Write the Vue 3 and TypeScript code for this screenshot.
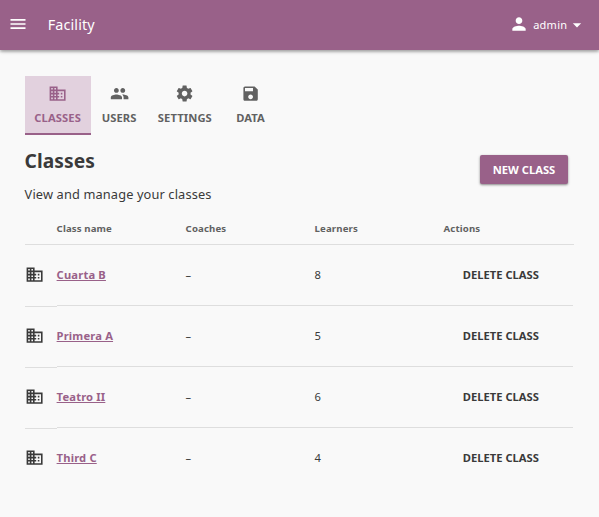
<script setup lang="ts">
interface Tab { label: string; path: string; width: number; active?: boolean }
interface Classroom { name: string; coaches: string; learners: number }

const business = 'M12 7V3H2v18h20V7H12zM6 19H4v-2h2v2zm0-4H4v-2h2v2zm0-4H4V9h2v2zm0-4H4V5h2v2zm4 12H8v-2h2v2zm0-4H8v-2h2v2zm0-4H8V9h2v2zm0-4H8V5h2v2zm10 12h-8v-2h2v-2h-2v-2h2v-2h-2V9h8v10zm-2-8h-2v2h2v-2zm0 4h-2v2h2v-2z'

const tabs: Tab[] = [
  { label: 'Classes', path: business, width: 66, active: true },
  { label: 'Users', width: 57, path: 'M16 11c1.66 0 2.99-1.34 2.99-3S17.66 5 16 5s-3 1.34-3 3 1.34 3 3 3zm-8 0c1.66 0 2.99-1.34 2.99-3S9.66 5 8 5 5 6.34 5 8s1.34 3 3 3zm0 2c-2.33 0-7 1.17-7 3.5V19h14v-2.500c0-2.330-4.670-3.500-7-3.500zm8 0c-.29 0-.62.020-.97.050 1.160.840 1.970 1.970 1.970 3.450V19h6v-2.500c0-2.330-4.670-3.500-7-3.500z' },
  { label: 'Settings', width: 74.500, path: 'M19.430 12.980c.040-.320.070-.640.070-.980s-.030-.660-.070-.980l2.110-1.650c.190-.150.240-.420.120-.640l-2-3.460c-.120-.220-.390-.300-.610-.220l-2.490 1c-.520-.400-1.080-.730-1.690-.980l-.380-2.650C14.460 2.180 14.250 2 14 2h-4c-.250 0-.460.180-.490.420l-.380 2.650c-.610.250-1.170.590-1.690.980l-2.490-1c-.230-.090-.490 0-.610.220l-2 3.460c-.130.220-.070.490.120.640l2.110 1.650c-.040.320-.070.650-.070.980s.030.660.070.980l-2.110 1.650c-.190.150-.240.420-.120.640l2 3.460c.120.220.390.300.610.220l2.490-1c.520.400 1.080.730 1.690.980l.380 2.650c.030.240.240.420.490.420h4c.250 0 .460-.180.490-.420l.380-2.650c.610-.250 1.170-.590 1.690-.980l2.490 1c.230.090.490 0 .610-.220l2-3.460c.120-.220.070-.490-.120-.640l-2.110-1.650zM12 15.500c-1.930 0-3.500-1.570-3.500-3.500s1.570-3.500 3.500-3.500 3.500 1.570 3.500 3.500-1.570 3.500-3.500 3.500z' },
  { label: 'Data', width: 57, path: 'M17 3H5c-1.110 0-2 .900-2 2v14c0 1.100.890 2 2 2h14c1.100 0 2-.900 2-2V7l-4-4zm-5 16c-1.660 0-3-1.340-3-3s1.340-3 3-3 3 1.340 3 3-1.340 3-3 3zm3-10H5V5h10v4z' },
]

const classes: Classroom[] = [
  { name: 'Cuarta B', coaches: '–', learners: 8 },
  { name: 'Primera A', coaches: '–', learners: 5 },
  { name: 'Teatro II', coaches: '–', learners: 6 },
  { name: 'Third C', coaches: '–', learners: 4 },
]
</script>

<template>
  <div class="page">
    <header class="app-bar">
      <svg class="menu" viewBox="0 0 24 24"><path d="M3 18h18v-2H3v2zm0-5h18v-2H3v2zm0-7v2h18V6H3z" /></svg>
      <span class="app-title">Facility</span>
      <div class="account">
        <svg class="person" viewBox="0 0 24 24"><path d="M12 12c2.210 0 4-1.790 4-4s-1.790-4-4-4-4 1.790-4 4 1.790 4 4 4zm0 2c-2.670 0-8 1.340-8 4v2h16v-2c0-2.660-5.330-4-8-4z" /></svg>
        <span class="username">admin</span>
        <svg class="caret" viewBox="0 0 24 24"><path d="M7 10l5 5 5-5z" /></svg>
      </div>
    </header>

    <main class="content">
      <nav class="tabs">
        <div v-for="tab in tabs" :key="tab.label" class="tab" :class="{ active: tab.active }" :style="{ width: tab.width + 'px' }">
          <svg class="tab-icon" viewBox="0 0 24 24"><path :d="tab.path" /></svg>
          <span>{{ tab.label }}</span>
        </div>
      </nav>

      <section class="heading">
        <div>
          <h1>Classes</h1>
          <p>View and manage your classes</p>
        </div>
        <button class="new-class">New class</button>
      </section>

      <div class="table">
        <div class="row head">
          <span></span><span>Class name</span><span>Coaches</span><span>Learners</span><span>Actions</span>
        </div>
        <div v-for="item in classes" :key="item.name" class="row body-row">
          <div class="cell icon-cell"><svg viewBox="0 0 24 24"><path :d="business" /></svg></div>
          <div class="cell"><a class="link">{{ item.name }}</a></div>
          <div class="cell">{{ item.coaches }}</div>
          <div class="cell">{{ item.learners }}</div>
          <div class="cell"><button class="delete">Delete class</button></div>
        </div>
      </div>
    </main>
  </div>
</template>

<style>
body { background: #f9f9f9; }
</style>

<style scoped>
.page {
  height: 517px;
  overflow: hidden;
  background: #f9f9f9;
  color: #3a3a3a;
  font-family: "Noto Sans", sans-serif;
}
svg { display: block; fill: currentColor; flex: none; }
button { font-family: inherit; border: 0; text-transform: uppercase; white-space: nowrap; }
.app-bar {
  height: 50px;
  box-sizing: border-box;
  display: flex;
  align-items: center;
  padding: 0 12px 0 8px;
  background: #996189;
  color: #fff;
  box-shadow: 0 2px 4px -1px rgba(0, 0, 0, .2), 0 1px 5px rgba(0, 0, 0, .12), 0 2px 2px rgba(0, 0, 0, .14);
}
.menu { width: 20px; height: 20px; margin-top: -2px; }
.app-title { margin-left: 19.800px; font-size: 14.400px; line-height: 20px; letter-spacing: .1px; }
.account { margin-left: auto; display: flex; align-items: center; }
.person { width: 20px; height: 20px; margin-top: -3px; }
.username { margin-left: 4.300px; font-size: 11px; line-height: 16px; letter-spacing: .25px; }
.caret { width: 20px; height: 20px; margin-left: -.3px; }
.content { padding: 26px 25px 0 24.600px; }
.tabs { display: flex; height: 59px; }
.tab {
  box-sizing: border-box;
  display: flex;
  flex-direction: column;
  align-items: center;
  padding-top: 7.600px;
  border-bottom: 2px solid transparent;
  color: #616161;
  font-size: 11.200px;
  letter-spacing: .1px;
  font-weight: 700;
  line-height: 16px;
  text-transform: uppercase;
}
.tab.active { background: #e2d1de; border-color: #996189; color: #996189; }
.tab-icon { width: 19.200px; height: 19.200px; margin-bottom: 7.200px; }
.heading { display: flex; justify-content: space-between; height: 78px; }
h1 { margin: 12px 0 0; font-size: 19.200px; line-height: 28px; font-weight: 700; letter-spacing: .08px; }
p { margin: 10px 0 0; font-size: 12.800px; line-height: 18px; letter-spacing: .13px; }
.new-class {
  width: 88px;
  height: 29px;
  margin: 20px 6px 0 0;
  padding: 0;
  border-radius: 2px;
  background: #996189;
  color: #fff;
  font-size: 11.200px;
  font-weight: 700;
  box-shadow: 0 1px 3px rgba(0, 0, 0, .25), 0 1px 2px rgba(0, 0, 0, .25);
}
.row { display: grid; grid-template-columns: 32px repeat(4, 129px); }
.head {
  height: 32px;
  box-sizing: border-box;
  border-bottom: 1px solid #dedede;
  color: #616161;
  font-size: 9.600px;
  font-weight: 700;
  line-height: 31px;
  letter-spacing: .14px;
}
.body-row { height: 61px; }
.cell {
  box-sizing: border-box;
  height: 61px;
  display: flex;
  align-items: center;
  padding-bottom: 2px;
  border-bottom: 1px solid #dedede;
  font-size: 11.200px;
}
.icon-cell { height: 62px; padding-bottom: 2.600px; }
.icon-cell svg { width: 19.200px; height: 19.200px; }
.body-row:last-child .cell { border-color: transparent; }
.link { color: #996189; font-weight: 700; text-decoration: underline; letter-spacing: .16px; }
.delete { background: none; padding: 0 0 0 19.200px; color: #3a3a3a; font-size: 11.200px; font-weight: 700; }
</style>
